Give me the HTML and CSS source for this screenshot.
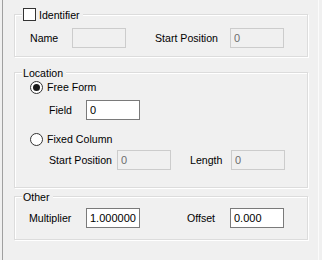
FILE: index.html
```html
<!DOCTYPE html>
<html lang="en">
<head>
  <meta charset="UTF-8">
  <title>Field Definition</title>
  <link rel="stylesheet" href="styles.css">
</head>
<body>
  <div class="panel">

    <!-- Identifier -->
    <div class="group group-ident">
      <label class="legend">
        <input type="checkbox" class="check">
        <span class="legend-text legend-check">Identifier</span>
      </label>
      <div class="row row-ident">
        <span class="lbl w-name">Name</span>
        <input type="text" class="box" disabled>
        <span class="lbl w-start gap-ident">Start Position</span>
        <input type="text" class="box" value="0" disabled>
      </div>
    </div>

    <!-- Location -->
    <div class="group group-loc">
      <div class="legend"><span class="legend-text">Location</span></div>
      <label class="opt opt-free">
        <input type="radio" name="loc" class="radio" checked>
        <span>Free Form</span>
      </label>
      <div class="row row-field">
        <span class="lbl w-field">Field</span>
        <input type="text" class="box" value="0">
      </div>
      <label class="opt opt-fixed">
        <input type="radio" name="loc" class="radio">
        <span>Fixed Column</span>
      </label>
      <div class="row row-fixed">
        <span class="lbl w-fstart">Start Position</span>
        <input type="text" class="box" value="0" disabled>
        <span class="lbl w-len gap-len">Length</span>
        <input type="text" class="box" value="0" disabled>
      </div>
    </div>

    <!-- Other -->
    <div class="group group-other">
      <div class="legend"><span class="legend-text">Other</span></div>
      <div class="row row-other">
        <span class="lbl w-mult">Multiplier</span>
        <input type="text" class="box" value="1.000000">
        <span class="lbl w-off gap-off">Offset</span>
        <input type="text" class="box" value="0.000">
      </div>
    </div>

  </div>
</body>
</html>
```

FILE: styles.css
```css
* { box-sizing: border-box; }
body { margin: 0; background: #f0f0f0; font-family: "Liberation Sans", Arial, sans-serif; font-size: 10.6px; color: #000; }

.panel {
  margin-left: 2px; width: 317px; height: 260px; padding-top: 14px;
  border-left: 1px solid #a0a0a0; border-right: 1px solid #fbfbfb;
}

/* group boxes */
.group {
  margin-left: 11px; width: 294px;
  border: 1px solid #dcdcdc;
  box-shadow: inset 1px 1px 0 #fff, 1px 1px 0 #fff;
}
.group-ident { height: 43px; }
.group-loc { height: 116px; margin-top: 15px; }
.group-other { height: 44px; margin-top: 8px; }

.legend {
  display: flex; align-items: center; width: max-content; height: 13px;
  margin: -6px 0 0 7px; padding: 0 3px 0 1px; background: #f0f0f0; line-height: 13px;
}
.group-ident .legend { margin-top: -7px; }
.legend-check { padding-top: 2px; margin-left: 3px; }

/* rows */
.row { display: flex; align-items: center; height: 20px; }
.lbl { flex: none; white-space: nowrap; }
.row-ident { margin-top: 7px; padding-left: 15px; }
.row-field { margin-top: 6px; padding-left: 34px; }
.row-fixed { margin-top: 4px; padding-left: 34px; }
.row-other { margin-top: 4px; padding-left: 14px; }

.w-name { width: 42px; }
.w-start { width: 75px; }
.gap-ident { margin-left: 29px; }
.w-field { width: 37px; }
.w-fstart { width: 68px; }
.w-len { width: 41px; }
.gap-len { margin-left: 19px; }
.w-mult { width: 57px; }
.w-off { width: 43px; }
.gap-off { margin-left: 47px; }

/* text boxes */
.box {
  flex: none; width: 54px; height: 20px; margin: 0; padding: 0 0 0 3px;
  border: 1px solid #7a7a7a; background: #fff; color: #000;
  font: inherit; font-size: 11px; outline: none;
}
.box:disabled { border-color: #cccccc; background: #f0f0f0; color: #6d6d6d; }

/* options */
.opt { display: flex; align-items: center; gap: 4px; height: 13px; padding-left: 15px; line-height: 13px; }
.opt-free { margin-top: 1px; }
.opt-fixed { margin-top: 13px; }

.check, .radio {
  appearance: none; -webkit-appearance: none; flex: none;
  width: 13px; height: 13px; margin: 0; background: #fff; border: 1px solid #333;
}
.radio { border-radius: 50%; position: relative; }
.radio:checked::after {
  content: ""; position: absolute; left: 2px; top: 2px;
  width: 7px; height: 7px; border-radius: 50%; background: #1a1a1a;
}
```
